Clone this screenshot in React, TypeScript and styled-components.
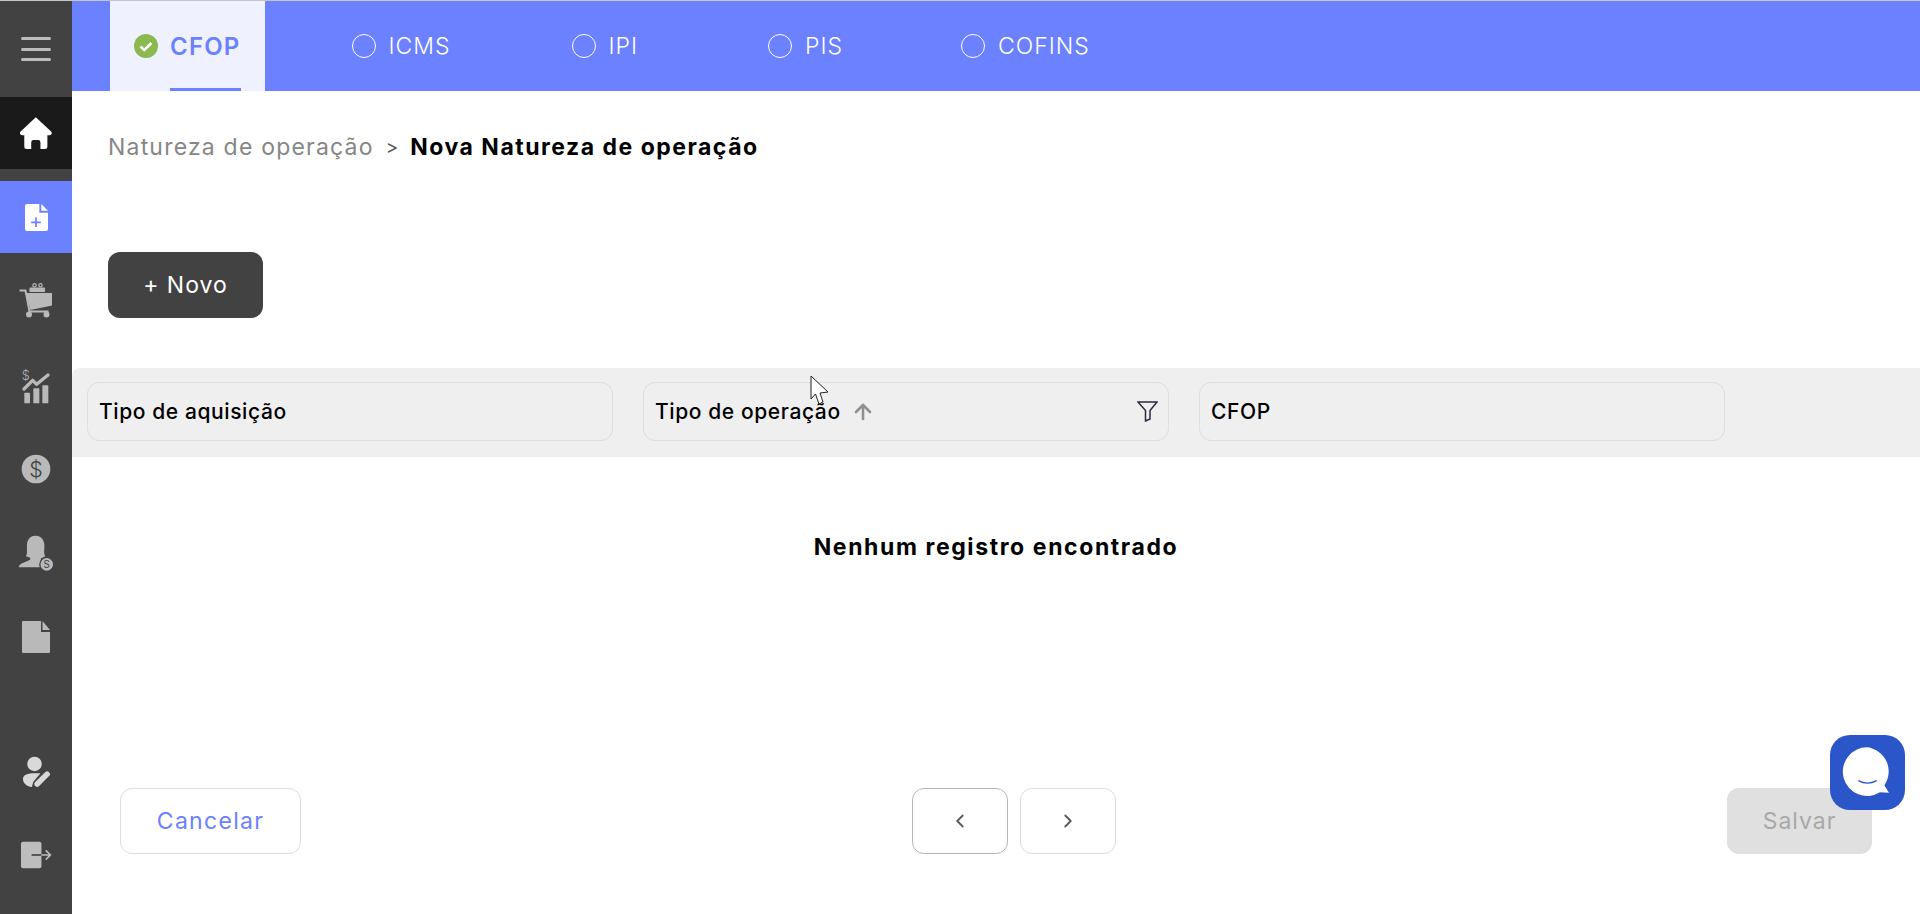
import React from "react";
import styled, { createGlobalStyle } from "styled-components";
import { FiArrowUp, FiChevronLeft, FiChevronRight } from "react-icons/fi";

const GlobalStyle = createGlobalStyle`
  html, body {
    margin: 0;
    padding: 0;
    height: 914px;
    overflow: hidden;
    background: #fff;
    font-family: "Inter", "Open Sans", sans-serif;
  }
  * {
    box-sizing: border-box;
  }
`;

const Page = styled.div`
  position: relative;
  display: flex;
  height: 914px;
  border-top: 1px solid #c4c6cc;
`;

const Sidebar = styled.nav`
  width: 72px;
  flex: none;
  display: flex;
  flex-direction: column;
  background: #424242;
`;

const MenuToggle = styled.div`
  height: 96px;
  display: flex;
  flex-direction: column;
  align-items: center;
  gap: 7.5px;
  padding-top: 36px;
`;

const MenuLine = styled.span`
  width: 30px;
  height: 3px;
  border-radius: 2px;
  background: #bdbdbd;
`;

const NavList = styled.div`
  display: flex;
  flex-direction: column;
  gap: 12px;
`;

const BottomNav = styled(NavList)`
  margin-top: 62px;
`;

const NavItem = styled.div<{ $state?: "home" | "active" }>`
  height: 72px;
  display: flex;
  align-items: center;
  justify-content: center;
  background: ${(p) =>
    p.$state === "home" ? "#1a1a1a" : p.$state === "active" ? "#6b81ff" : "transparent"};
  color: ${(p) => (p.$state ? "#fff" : "#b9b9b9")};
`;

const Main = styled.main`
  flex: 1;
  min-width: 0;
  display: flex;
  flex-direction: column;
`;

const TabBar = styled.div`
  height: 90px;
  flex: none;
  display: flex;
  padding-left: 38px;
  background: #6b81ff;
`;

const Tab = styled.div<{ $active?: boolean; $offset?: number }>`
  position: relative;
  display: flex;
  align-items: center;
  gap: ${(p) => (p.$active ? 12 : 13)}px;
  margin-left: ${(p) => p.$offset || 0}px;
  padding: ${(p) => (p.$active ? "0 24px" : "0")};
  background: ${(p) => (p.$active ? "#eff1ff" : "transparent")};
  color: ${(p) => (p.$active ? "#6b81ff" : "#fff")};
  font-size: ${(p) => (p.$active ? 24 : 23)}px;
  font-weight: ${(p) => (p.$active ? 600 : 300)};
  letter-spacing: ${(p) => (p.$active ? 1.2 : 1)}px;
`;

const TabUnderline = styled.span`
  position: absolute;
  left: 60px;
  right: 24px;
  bottom: 0;
  height: 3px;
  background: #6b81ff;
`;

const RadioMark = styled.span`
  width: 24px;
  height: 24px;
  border: 1.5px solid #fff;
  border-radius: 50%;
`;

const Content = styled.div`
  flex: 1;
  display: flex;
  flex-direction: column;
`;

const Breadcrumb = styled.div`
  display: flex;
  align-items: center;
  gap: 12px;
  height: 30px;
  margin: 41px 0 0 36px;
  font-size: 23px;
`;

const CrumbLink = styled.span`
  color: #868686;
  font-weight: 400;
  letter-spacing: 1.2px;
`;

const CrumbSeparator = styled.span`
  color: #555;
  font-size: 19px;
`;

const CrumbCurrent = styled.span`
  color: #000;
  font-weight: 700;
  letter-spacing: 1.5px;
`;

const NewButton = styled.button`
  align-self: flex-start;
  width: 155px;
  height: 66px;
  margin: 90px 0 0 36px;
  border: none;
  border-radius: 12px;
  background: #424242;
  color: #fff;
  font-family: inherit;
  font-size: 23px;
  font-weight: 400;
  letter-spacing: 1px;
`;

const TableHead = styled.div`
  display: flex;
  gap: 30px;
  height: 89px;
  margin-top: 50px;
  padding: 14px 15px 16px;
  border-radius: 8px 0 0 0;
  background: #efefef;
`;

const HeadCell = styled.div`
  width: 526px;
  display: flex;
  align-items: center;
  padding: 0 10px 0 11px;
  border: 1px solid #dedede;
  border-radius: 12px;
  color: #000;
  font-size: 21px;
  font-weight: 500;
  letter-spacing: 0.6px;
`;

const SortArrow = styled.span`
  display: flex;
  margin-left: 10px;
  color: #8f8f8f;
`;

const FilterIcon = styled.svg`
  margin-left: auto;
`;

const EmptyMessage = styled.div`
  margin-top: 73px;
  text-align: center;
  color: #000;
  font-size: 23px;
  font-weight: 700;
  letter-spacing: 1.6px;
  line-height: 34px;
`;

const Footer = styled.div`
  display: flex;
  align-items: center;
  justify-content: space-between;
  margin-top: auto;
  margin-bottom: 60px;
  padding: 0 48px;
`;

const CancelButton = styled.button`
  width: 181px;
  height: 66px;
  border: 1px solid #dedede;
  border-radius: 12px;
  background: #fff;
  color: #6b81ff;
  font-family: inherit;
  font-size: 23px;
  letter-spacing: 1.3px;
`;

const Pager = styled.div`
  display: flex;
  gap: 12px;
`;

const PageButton = styled.button<{ $focused?: boolean }>`
  width: 96px;
  height: 66px;
  display: flex;
  align-items: center;
  justify-content: center;
  border: 1px solid ${(p) => (p.$focused ? "#b5b5b5" : "#dedede")};
  border-radius: 12px;
  background: #fff;
  color: #595959;
`;

const SaveButton = styled.button`
  width: 145px;
  height: 66px;
  border: none;
  border-radius: 12px;
  background: #e0e0e0;
  color: #a8a8a8;
  font-family: inherit;
  font-size: 23px;
  letter-spacing: 1px;
`;

const ChatBubble = styled.div`
  position: absolute;
  left: 1830px;
  top: 734px;
  width: 75px;
  height: 75px;
  display: flex;
  border-radius: 20px;
  background: #2a56c9;
`;

const Cursor = styled.svg`
  position: absolute;
  left: 810px;
  top: 374px;
`;

function HomeIcon() {
  return (
    <svg width="34" height="34" viewBox="55 345 103 103">
      <path
        fill="#fff"
        d="M106 349 L153 393 Q157 402 148 403 H141 V438 Q141 445 134 445 H120 V425 Q120 418 113 418 H99 Q92 418 92 425 V445 H78 Q71 445 71 438 V403 H64 Q55 402 59 393 Z"
      />
    </svg>
  );
}

function FilePlusIcon() {
  return (
    <svg width="23" height="27" viewBox="0 0 24 28">
      <path fill="currentColor" d="M2 0h13v9h9v17a2 2 0 0 1-2 2H2a2 2 0 0 1-2-2V2a2 2 0 0 1 2-2z" />
      <path fill="currentColor" d="M17 0l7 7h-7z" />
      <path stroke="#6b81ff" strokeWidth="1.8" d="M11.500 14v10M6.500 19h10" />
    </svg>
  );
}

function CartIcon() {
  return (
    <svg width="34" height="36" viewBox="0 0 34 36" fill="#b9b9b9">
      <rect x="10.500" y="4.500" width="15.500" height="4.500" rx="0.5" />
      <circle cx="15.500" cy="2.300" r="1.700" fill="none" stroke="#b9b9b9" strokeWidth="1.200" />
      <circle cx="21.500" cy="2.300" r="1.700" fill="none" stroke="#b9b9b9" strokeWidth="1.200" />
      <path d="M7 10h26v12.500l-21.500 4.500z" />
      <path d="M0.500 7.500h6l4 21h19" fill="none" stroke="#b9b9b9" strokeWidth="2" />
      <circle cx="10" cy="31.500" r="3" />
      <circle cx="27.500" cy="31.500" r="3" />
    </svg>
  );
}

function ChartIcon() {
  return (
    <svg width="32" height="38" viewBox="30 285 96 114" fill="#b9b9b9">
      <text x="35" y="328" fontSize="38" fontWeight="300" fontFamily="Inter, sans-serif">$</text>
      <path d="M42 354 L68 328 L80 340 L114 312" fill="none" stroke="#b9b9b9" strokeWidth="10" strokeLinecap="round" strokeLinejoin="round" />
      <rect x="43" y="365" width="17" height="32" rx="2" />
      <rect x="70" y="352" width="18" height="45" rx="2" />
      <rect x="97" y="343" width="18" height="54" rx="2" />
    </svg>
  );
}

function CoinIcon() {
  return (
    <svg width="30" height="30" viewBox="30 40 90 90">
      <circle cx="75" cy="85" r="43" fill="#b9b9b9" />
      <text x="75" y="108" textAnchor="middle" fontSize="64" fontWeight="300" fontFamily="Inter, sans-serif" fill="#424242">$</text>
    </svg>
  );
}

function WomanIcon() {
  return (
    <svg width="38" height="38" viewBox="20 280 115 115">
      <path
        fill="#b9b9b9"
        d="M76 285 C58 285 50 298 50 316 C50 330 52 340 47 347 L60 352 V357 C48 366 28 366 25 381 H90 C92 372 94 362 92 354 L106 347 C100 340 103 330 103 316 C103 298 94 285 76 285Z"
      />
      <circle cx="110" cy="372" r="21" fill="#b9b9b9" stroke="#424242" strokeWidth="4" />
      <text x="110" y="383" textAnchor="middle" fontSize="30" fontFamily="Inter, sans-serif" fill="#424242">S</text>
    </svg>
  );
}

function FileIcon() {
  return (
    <svg width="28" height="32" viewBox="0 0 28 32" fill="#b9b9b9">
      <path d="M1 0h18v11h9v20a1 1 0 0 1-1 1H1a1 1 0 0 1-1-1V1a1 1 0 0 1 1-1z" />
      <path d="M20.500 0l7.500 9h-7.500z" />
    </svg>
  );
}

function UserEditIcon() {
  return (
    <svg width="31" height="33" viewBox="20 40 92 100" fill="#d9d9d9">
      <circle cx="60" cy="67" r="22" />
      <path d="M25 112 C25 100 40 95 60 95 L78 95 L56 122 L52 137 C38 135 25 128 25 112Z" />
      <path d="M68 128 L98 98" fill="none" stroke="#d9d9d9" strokeWidth="17" strokeLinecap="round" />
    </svg>
  );
}

function ExitIcon() {
  return (
    <svg width="33" height="30" viewBox="30 300 100 90">
      <rect x="33" y="305" width="62" height="80" rx="6" fill="#bdbdbd" />
      <path d="M65 345 H95" fill="none" strokeWidth="5" stroke="#424242" />
      <path d="M95 345 H122 M108 331 L122 345 L108 359" fill="none" strokeWidth="5" stroke="#bdbdbd" />
    </svg>
  );
}

const tabs = [
  { label: "ICMS", offset: 87 },
  { label: "IPI", offset: 121 },
  { label: "PIS", offset: 130 },
  { label: "COFINS", offset: 118 },
];

function App() {
  return (
    <Page>
      <GlobalStyle />
      <Sidebar>
        <MenuToggle>
          <MenuLine />
          <MenuLine />
          <MenuLine />
        </MenuToggle>
        <NavList>
          <NavItem $state="home">
            <HomeIcon />
          </NavItem>
          <NavItem $state="active">
            <FilePlusIcon />
          </NavItem>
          <NavItem>
            <CartIcon />
          </NavItem>
          <NavItem>
            <ChartIcon />
          </NavItem>
          <NavItem>
            <CoinIcon />
          </NavItem>
          <NavItem>
            <WomanIcon />
          </NavItem>
          <NavItem>
            <FileIcon />
          </NavItem>
        </NavList>
        <BottomNav>
          <NavItem>
            <UserEditIcon />
          </NavItem>
          <NavItem>
            <ExitIcon />
          </NavItem>
        </BottomNav>
      </Sidebar>

      <Main>
        <TabBar>
          <Tab $active>
            <svg width="24" height="24" viewBox="0 0 24 24">
              <circle cx="12" cy="12" r="12" fill="#8bb84f" />
              <path d="M6.500 12.500l3.800 3.500 7.200-7" fill="none" stroke="#fff" strokeWidth="2.600" />
            </svg>
            CFOP
            <TabUnderline />
          </Tab>
          {tabs.map((tab) => (
            <Tab key={tab.label} $offset={tab.offset}>
              <RadioMark />
              {tab.label}
            </Tab>
          ))}
        </TabBar>

        <Content>
          <Breadcrumb>
            <CrumbLink>Natureza de operação</CrumbLink>
            <CrumbSeparator>&gt;</CrumbSeparator>
            <CrumbCurrent>Nova Natureza de operação</CrumbCurrent>
          </Breadcrumb>

          <NewButton>+ Novo</NewButton>

          <TableHead>
            <HeadCell>Tipo de aquisição</HeadCell>
            <HeadCell>
              Tipo de operação
              <SortArrow>
                <FiArrowUp size={24} strokeWidth={2.6} />
              </SortArrow>
              <FilterIcon width="21" height="21" viewBox="0 0 21 21">
                <path d="M1 1h19l-7 8.500v8.500l-4.500 2v-10.500z" fill="none" stroke="#2b2b40" strokeWidth="1.500" />
              </FilterIcon>
            </HeadCell>
            <HeadCell>CFOP</HeadCell>
          </TableHead>

          <EmptyMessage>Nenhum registro encontrado</EmptyMessage>

          <Footer>
            <CancelButton>Cancelar</CancelButton>
            <Pager>
              <PageButton $focused>
                <FiChevronLeft size={22} />
              </PageButton>
              <PageButton>
                <FiChevronRight size={22} />
              </PageButton>
            </Pager>
            <SaveButton>Salvar</SaveButton>
          </Footer>
        </Content>
      </Main>

      <ChatBubble>
        <svg width="75" height="75" viewBox="0 0 225 225">
          <path fill="#fff" d="M112 37a73 73 0 1 0 38 135l27 1-14-22A73 73 0 0 0 112 37z" />
          <path d="M85 137 Q112 152 140 137" fill="none" stroke="#2a56c9" strokeWidth="4" />
        </svg>
      </ChatBubble>

      <Cursor width="20" height="31" viewBox="0 0 20 31">
        <path d="M1 1V24L5.500 19L9 29L13 27L10 18L18 17Z" fill="#fff" stroke="#222" strokeWidth="1" />
      </Cursor>
    </Page>
  );
}

export default App;
